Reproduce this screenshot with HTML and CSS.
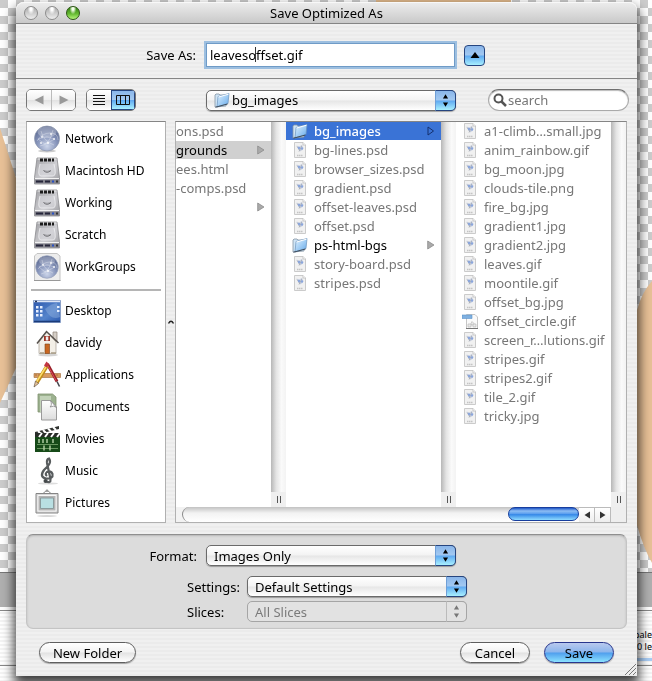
FILE: index.html
```html
<!DOCTYPE html>
<html lang="en">
<head>
<meta charset="utf-8">
<title>Save Optimized As</title>
<link rel="stylesheet" href="styles.css">
</head>
<body>
<svg class="defs" width="0" height="0" aria-hidden="true">
  <defs>
    <radialGradient id="globe" cx=".5" cy=".8" r=".8"><stop offset="0" stop-color="#cdd6ea"/><stop offset=".5" stop-color="#8795bb"/><stop offset="1" stop-color="#56648c"/></radialGradient>
    <linearGradient id="metal" x1="0" y1="0" x2="1" y2="1"><stop offset="0" stop-color="#a2a2a6"/><stop offset=".55" stop-color="#cfcfd3"/><stop offset="1" stop-color="#98989c"/></linearGradient>
    <linearGradient id="fold" x1="0" y1="0" x2="1" y2="1"><stop offset="0" stop-color="#e2f3ff"/><stop offset="1" stop-color="#64a9ea"/></linearGradient>
    <linearGradient id="desk" x1="0" y1="0" x2="1" y2="1"><stop offset="0" stop-color="#2c57ad"/><stop offset=".6" stop-color="#5584cb"/><stop offset="1" stop-color="#2a59ae"/></linearGradient>
    <linearGradient id="page" x1="0" y1="0" x2="0" y2="1"><stop offset="0" stop-color="#fff"/><stop offset="1" stop-color="#dcdcdc"/></linearGradient>
    <symbol id="i-network" viewBox="0 0 28 28">
      <ellipse cx="14" cy="26" rx="9" ry="1.5" fill="#ccc"/>
      <circle cx="14" cy="13.500" r="12.500" fill="url(#globe)" stroke="#8a93ab" stroke-width=".7"/>
      <ellipse cx="14" cy="7" rx="9.500" ry="5.500" fill="#fff" opacity=".28"/>
      <path d="M4 16Q9 8 17 8T25 15M7 21Q17 20 20 5M8 6Q10 16 21 20M14 12L22 14L12 19L5 14Z" fill="none" stroke="#fff" stroke-width=".6" opacity=".5"/>
      <g fill="#fff" opacity=".9"><circle cx="9" cy="12" r=".9"/><circle cx="18" cy="9" r=".9"/><circle cx="15" cy="18" r="1.1"/><circle cx="21" cy="14" r=".9"/><circle cx="8" cy="18" r=".9"/></g>
    </symbol>
    <symbol id="i-disk" viewBox="0 0 28 28">
      <path d="M4 1H24L26.500 20.500V27H1.500V20.500Z" fill="url(#metal)" stroke="#8a8a8e" stroke-width=".8"/>
      <path d="M4.500 2H23.500" stroke="#eee"/>
      <path d="M7 1.500h3v3H7zM11 1.500h3v3h-3zM15 1.500h3v3h-3zM19 1.500h2v3h-2z" fill="#1c1c1c"/>
      <path d="M7 7Q4 19 8 19H20Q24 19 21 7" fill="#d6d6da" fill-opacity=".6" stroke="#f0f0f3" stroke-width=".8"/>
      <path d="M10.500 13.500Q14 17 18 13.500" fill="none" stroke="#69696d"/><path d="M10.500 13.500Q14 15 18 13.500" fill="none" stroke="#8d8d91" stroke-width=".7"/>
      <path d="M2 21.500H26" stroke="#f2f2f2"/><path d="M2 22.500H26V26.500H2Z" fill="#85858e"/><path d="M3 24.500h7M12 24.500h5" stroke="#26263a" stroke-width="2"/><path d="M19 24.500h2" stroke="#2751c4" stroke-width="2"/><path d="M23 24.500h2" stroke="#333" stroke-width="2"/>
    </symbol>
    <symbol id="i-group" viewBox="0 0 28 28">
      <path d="M4 .5H24L27 3V27.500H1.500V3Z" fill="#ededed" stroke="#c4c4c4"/><path d="M1 27.500H27.500" stroke="#999"/>
      <circle cx="14" cy="14" r="11.300" fill="url(#globe)" stroke="#98a2bc" stroke-width=".7"/>
      <ellipse cx="14" cy="8" rx="8" ry="4.500" fill="#fff" opacity=".25"/>
      <path d="M5 16Q10 9 17 9T24 15M8 21Q16 20 19 6M9 7Q10 16 20 20M14 12L22 14L12 19L6 14Z" fill="none" stroke="#fff" stroke-width=".6" opacity=".5"/>
      <g fill="#fff" opacity=".9"><circle cx="10" cy="12" r=".9"/><circle cx="18" cy="10" r=".9"/><circle cx="15" cy="18" r="1.1"/><circle cx="21" cy="14" r=".9"/></g>
    </symbol>
    <symbol id="i-desktop" viewBox="0 0 28 28">
      <path d="M.5 3.500H27.500V25.500H.5Z" fill="url(#desk)" stroke="#8aa0c8"/><path d="M1 4.500H27" stroke="#dfe6f6" stroke-width="1.500"/><path d="M2 4.500h2" stroke="#235" stroke-width="1.500"/>
      <path d="M12 12Q19 6 24 6L27 20Q18 24 12 12" fill="#89abdc" opacity=".5"/>
      <path d="M3 9h2.500v2.500H3zM7 9h2.500v2.500H7zM3 13h2.500v2.500H3zM7 13h2.500v2.500H7zM3 17h2.500v2.500H3zM7 17h2.500v2.500H7zM24 9h2.500v2H24zM24 13h2.500v2H24z" fill="#e8f0ff"/><path d="M1 24.500H27" stroke="#1b3b79" stroke-width="1.500"/>
    </symbol>
    <symbol id="i-home" viewBox="0 0 28 28">
      <ellipse cx="15" cy="26" rx="10" ry="1.500" fill="#d4d4d4"/>
      <path d="M20 3h4v9h-4z" fill="#d5cec6" stroke="#8a8074" stroke-width=".7"/>
      <path d="M6 13L14 3L23 13V24.500H6Z" fill="#f3efe7" stroke="#a39b8f" stroke-width=".7"/>
      <path d="M4 14.500L13.500 2.500L25.500 14" fill="none" stroke="#55504c" stroke-width="1.500"/>
      <path d="M11 7h6v5h-6z" fill="#9c3426"/><path d="M12.800 7.500h2.500v4h-2.500z" fill="#eee"/><path d="M12 15h4.500v9.500H12z" fill="#c96722" stroke="#7e4318" stroke-width=".6"/><path d="M7 24h4M18 24h5" stroke="#a99d86" stroke-width="1.500"/>
    </symbol>
    <symbol id="i-apps" viewBox="0 0 28 28">
      <path d="M1 12.500H27.500V16.500H1Z" fill="#d79a60" stroke="#a06a38" stroke-width=".6"/><path d="M3 13v2M6 13v2M9 13v2M21 13v2M24 13v2" stroke="#8e5826" stroke-width=".6"/>
      <path d="M14.500 3L24 20.500" stroke="#99202a" stroke-width="3"/><path d="M14 3L23 19.500" stroke="#e0505a" stroke-width="1"/><path d="M24 20.500L26.500 25.500" stroke="#42434b" stroke-width="1.500"/>
      <path d="M14 5L4 21.500" stroke="#c18d1c" stroke-width="3.500"/><path d="M13.500 5L3.500 21" stroke="#ffdf6c" stroke-width="1.500"/><path d="M2.500 20L1 26L5.500 22.500Z" fill="#e8c49b" stroke="#534333" stroke-width=".6"/><path d="M13.500 .5L16 3L13.500 6.500L11 4.500Z" fill="#c23642"/>
    </symbol>
    <symbol id="i-docs" viewBox="0 0 28 28">
      <path d="M5 1H19.500L23 4V19H5Z" fill="#9cb18f" stroke="#80936f" stroke-width=".8"/><path d="M7 3H18V19H7Z" fill="#c2d2b8"/>
      <path d="M8.500 7.500H17.500L23.500 14V27H8.500Z" fill="url(#page)" stroke="#9a9a9a"/><path d="M17.500 7.500Q19.500 12 17 14Q21 12 23.500 14.500Z" fill="#fff" stroke="#888" stroke-width=".8"/>
    </symbol>
    <symbol id="i-movies" viewBox="0 0 28 28">
      <path d="M2 7L26 1V4L2 10Z" fill="#303330"/><path d="M5 6l3 3M10 5l3 3M15 3.500l3 3M20 2l3 3" stroke="#fff" stroke-width="2"/>
      <path d="M2 8H27V27H2Z" fill="#164a18"/><path d="M2 8H27V12H2Z" fill="#292c29"/><path d="M6 12l3-4M12 12l3-4M18 12l3-4M24 12l3-4" stroke="#fff" stroke-width="2"/>
      <path d="M4 19.500h21M4 23.500h21" stroke="#7eaa72" stroke-width=".8"/><path d="M6 14v4M10 14v4M14 14v4M20 14v4M11 20.500v5M17 20.500v5" stroke="#b7d2a9" stroke-width="1.400"/>
    </symbol>
    <symbol id="i-music" viewBox="0 0 28 28">
      <ellipse cx="15" cy="26.500" rx="10" ry="1" fill="#ddd"/>
      <path d="M12.500 24Q18 27 17.500 22L14 6Q13.500 2 16 1.500Q18.500 5 15 9L11 13Q6 20 13 21.500Q20.500 22 19.500 17Q18 13 14 15Q11.500 17 14 19" fill="none" stroke="#585c5e" stroke-width="2.200"/><circle cx="12.500" cy="24" r="2" fill="#45494b"/>
    </symbol>
    <symbol id="i-pics" viewBox="0 0 28 28">
      <path d="M10 4.500L14 1L18 4.500" fill="none" stroke="#888"/><circle cx="14" cy="1.800" r="1.300" fill="#999"/><ellipse cx="14" cy="27" rx="10" ry=".8" fill="#ccc"/>
      <path d="M3 4.500H25V24H3Z" fill="#d8d8d8" stroke="#858585"/><path d="M5 6.500H23V22H5Z" fill="#b4b4b4" stroke="#f6f6f6"/><path d="M7.500 9H20.500V19.500H7.500Z" fill="#b9dfe2" stroke="#8b9b9d"/>
    </symbol>
    <symbol id="i-folder" viewBox="0 0 16 16">
      <path d="M1 3L2 2H5L6 3H12V14L1 15Z" fill="#cfe4f5" stroke="#8594a3" stroke-width=".8"/>
      <path d="M4 4.500L15 1.500L14 11.500L3 15Z" fill="url(#fold)" stroke="#6c93bd" stroke-width=".7"/><path d="M4.500 5L14.500 2.200" stroke="#fff"/><path d="M1.500 15.200L13.500 12" stroke="#3f4c5a"/>
    </symbol>
    <symbol id="i-file" viewBox="0 0 16 16">
      <path d="M2.500 .5H11L13.500 3V15.500H2.500Z" fill="#f1f1f1" stroke="#cbcbcb"/><path d="M11 .5V3H13.500" fill="#fff" stroke="#b5b5b5" stroke-width=".7"/>
      <path d="M4.500 3.500L7.500 4.500L9.500 3L11.500 5.500L10.500 8L8 9.500L6.500 8Z" fill="#ccd3e2"/><path d="M5 4.500L8 8.500M10 3.500L7 9.500" stroke="#a5a9b3" stroke-width=".8"/><circle cx="7" cy="6" r="1.200" fill="#8aa5dc"/><circle cx="10" cy="6.500" r="1.200" fill="#8aa5dc"/>
      <path d="M5 13.500h6" stroke="#c4c4c4" stroke-width="1.500" stroke-dasharray="1.500 .5"/>
    </symbol>
    <symbol id="i-slice" viewBox="0 0 16 16">
      <path d="M4.500 1.500H13L15.500 4V15.500H4.500Z" fill="#fafafa" stroke="#c6c6c6"/><path d="M4 15.500H16" stroke="#777"/><path d="M0 2H10V5.500H0Z" fill="#7fb0e0" stroke="#5c93cb" stroke-width=".6"/>
      <path d="M6 11h3v3H6zM10 8.500l2 2-2 2-1-2zM11 11h3v3h-3z" fill="#e9e9e9" stroke="#bbb" stroke-width=".7"/>
    </symbol>
    <symbol id="i-updown" viewBox="0 0 20 20"><path d="M10 3.500L12.700 8H7.300ZM10 16.500L12.700 12H7.300Z" fill="currentColor"/></symbol>
    <symbol id="i-right" viewBox="0 0 8 10"><path d="M.7 1L7 5L.7 9Z" fill="#aaa" stroke="#8b8b8b" stroke-width=".8"/></symbol>
    <symbol id="i-right-open" viewBox="0 0 8 10"><path d="M1 1L6.500 5L1 9Z" fill="none" stroke="#14306e"/></symbol>
  </defs>
</svg>

<div class="backdrop" aria-hidden="true">
  <svg class="shape-left" width="24" height="300" viewBox="0 120 24 300"><path d="M0 128L16 178L24 220V345L16 368L0 403Z" fill="#e8c197"/></svg>
  <svg class="shape-right" width="15" height="300" viewBox="637 270 15 300"><path d="M652 281Q642 292 637 310V525Q643 547 652 563Z" fill="#e8c197"/></svg>
  <span class="strip-top"></span>
  <div class="palette"><span>pale</span><span>00 le</span></div>
</div>

<main class="window">
  <header class="titlebar">
    <div class="lights">
      <button class="light" aria-label="Close"></button>
      <button class="light" aria-label="Minimize"></button>
      <button class="light green" aria-label="Zoom"></button>
    </div>
    <h1>Save Optimized As</h1>
  </header>

  <section class="control-row name-row">
    <label class="lead" for="filename">Save As:</label>
    <div class="field">
      <input class="filename" id="filename" type="text" value="leavesoffset.gif">
      <span class="caret"></span>
    </div>
    <button class="aqua collapse" aria-label="Collapse browser"><svg width="10" height="8" viewBox="0 0 10 8"><path d="M5 1L9.500 7H.5Z" fill="#000"/></svg></button>
  </section>

  <section class="control-row tool-row">
    <div class="tools">
      <div class="segments">
        <button aria-label="Back"><svg width="10" height="10" viewBox="0 0 10 10"><path d="M9.500 .5V9.500L.5 5Z" fill="#999"/></svg></button>
        <button aria-label="Forward"><svg width="10" height="10" viewBox="0 0 10 10"><path d="M.5 .5V9.500L9.500 5Z" fill="#999"/></svg></button>
      </div>
      <div class="segments">
        <button aria-label="List view"><svg width="12" height="12" viewBox="0 0 12 12"><path d="M0 1.500H12M0 4.500H12M0 7.500H12M0 10.500H12" stroke="#111"/></svg></button>
        <button class="on" aria-label="Column view"><svg width="14" height="12" viewBox="0 0 14 12"><path d="M.5 1.500H13.500V10.500H.5ZM4.500 1V11M9.500 1V11" fill="none" stroke="#111"/></svg></button>
      </div>
    </div>
    <div class="popup with-icon">
      <svg class="lead-icon" width="16" height="16"><use href="#i-folder"/></svg>
      <select aria-label="Location"><option>bg_images</option></select>
      <svg class="knob"><use href="#i-updown"/></svg>
    </div>
    <div class="search">
      <svg width="14" height="14" viewBox="0 0 14 14"><circle cx="5.500" cy="5.500" r="4" fill="none" stroke="#555" stroke-width="2"/><path d="M8.500 8.500L13 13" stroke="#555" stroke-width="2.500"/></svg>
      <input type="search" aria-label="Search" placeholder="search">
    </div>
  </section>

  <section class="browser">
    <nav class="places">
      <ul>
        <li><svg><use href="#i-network"/></svg>Network</li>
        <li><svg><use href="#i-disk"/></svg>Macintosh HD</li>
        <li><svg><use href="#i-disk"/></svg>Working</li>
        <li><svg><use href="#i-disk"/></svg>Scratch</li>
        <li><svg><use href="#i-group"/></svg>WorkGroups</li>
      </ul>
      <hr>
      <ul>
        <li><svg><use href="#i-desktop"/></svg>Desktop</li>
        <li><svg><use href="#i-home"/></svg>davidy</li>
        <li><svg><use href="#i-apps"/></svg>Applications</li>
        <li><svg><use href="#i-docs"/></svg>Documents</li>
        <li><svg><use href="#i-movies"/></svg>Movies</li>
        <li><svg><use href="#i-music"/></svg>Music</li>
        <li><svg><use href="#i-pics"/></svg>Pictures</li>
      </ul>
    </nav>
    <div class="splitter"><svg width="6" height="4" viewBox="0 0 6 4"><path d="M.5 3.500Q3 -1 5.500 3.500" fill="none" stroke="#222" stroke-width="1.400"/></svg></div>
    <div class="columns">
      <div class="panes">
        <ul class="files first">
          <li>ons.psd</li>
          <li class="trail">grounds<svg class="more"><use href="#i-right"/></svg></li>
          <li>ees.html</li>
          <li>-comps.psd</li>
          <li><svg class="more"><use href="#i-right"/></svg></li>
        </ul>
        <div class="gutter"><span class="grip"></span></div>
        <ul class="files">
          <li class="selected"><svg><use href="#i-folder"/></svg>bg_images<svg class="more"><use href="#i-right-open"/></svg></li>
          <li><svg><use href="#i-file"/></svg>bg-lines.psd</li>
          <li><svg><use href="#i-file"/></svg>browser_sizes.psd</li>
          <li><svg><use href="#i-file"/></svg>gradient.psd</li>
          <li><svg><use href="#i-file"/></svg>offset-leaves.psd</li>
          <li><svg><use href="#i-file"/></svg>offset.psd</li>
          <li class="folder"><svg><use href="#i-folder"/></svg>ps-html-bgs<svg class="more"><use href="#i-right"/></svg></li>
          <li><svg><use href="#i-file"/></svg>story-board.psd</li>
          <li><svg><use href="#i-file"/></svg>stripes.psd</li>
        </ul>
        <div class="gutter"><span class="grip"></span></div>
        <ul class="files">
          <li><svg><use href="#i-file"/></svg>a1-climb…small.jpg</li>
          <li><svg><use href="#i-file"/></svg>anim_rainbow.gif</li>
          <li><svg><use href="#i-file"/></svg>bg_moon.jpg</li>
          <li><svg><use href="#i-file"/></svg>clouds-tile.png</li>
          <li><svg><use href="#i-file"/></svg>fire_bg.jpg</li>
          <li><svg><use href="#i-file"/></svg>gradient1.jpg</li>
          <li><svg><use href="#i-file"/></svg>gradient2.jpg</li>
          <li><svg><use href="#i-file"/></svg>leaves.gif</li>
          <li><svg><use href="#i-file"/></svg>moontile.gif</li>
          <li><svg><use href="#i-file"/></svg>offset_bg.jpg</li>
          <li><svg><use href="#i-slice"/></svg>offset_circle.gif</li>
          <li><svg><use href="#i-file"/></svg>screen_r…lutions.gif</li>
          <li><svg><use href="#i-file"/></svg>stripes.gif</li>
          <li><svg><use href="#i-file"/></svg>stripes2.gif</li>
          <li><svg><use href="#i-file"/></svg>tile_2.gif</li>
          <li><svg><use href="#i-file"/></svg>tricky.jpg</li>
        </ul>
        <div class="gutter"><span class="grip"></span></div>
      </div>
      <div class="hscroll">
        <div class="track"><span class="thumb"></span></div>
        <button aria-label="Scroll left"><svg width="6" height="8" viewBox="0 0 6 8"><path d="M6 .5V7.500L.5 4Z" fill="#333"/></svg></button>
        <button aria-label="Scroll right"><svg width="6" height="8" viewBox="0 0 6 8"><path d="M0 .5V7.500L5.500 4Z" fill="#333"/></svg></button>
        <span class="corner"></span>
      </div>
    </div>
  </section>

  <section class="options">
    <div class="option">
      <label for="format">Format:</label>
      <div class="popup"><select id="format"><option>Images Only</option></select><svg class="knob"><use href="#i-updown"/></svg></div>
    </div>
    <div class="option sub">
      <label for="settings">Settings:</label>
      <div class="popup"><select id="settings"><option>Default Settings</option></select><svg class="knob"><use href="#i-updown"/></svg></div>
      <label for="slices">Slices:</label>
      <div class="popup off"><select id="slices" disabled><option>All Slices</option></select><svg class="knob"><use href="#i-updown"/></svg></div>
    </div>
  </section>

  <footer class="actions">
    <button class="pill wide">New Folder</button>
    <span class="spacer"></span>
    <button class="pill">Cancel</button>
    <button class="pill default">Save</button>
    <svg class="resize" width="12" height="12" viewBox="0 0 12 12"><path d="M1 12L12 1M5 12L12 5M9 12L12 9" stroke="#777"/></svg>
  </footer>
</main>
</body>
</html>
```
FILE: styles.css
```css
* { box-sizing: border-box; }

body {
  margin: 0;
  padding: 2px 15px 5px 16px;
  font: 13px/18px "Noto Sans", "Open Sans", sans-serif;
  color: #000;
}

button, input, select { font: inherit; color: inherit; margin: 0; }
button { padding: 0; display: flex; align-items: center; justify-content: center; }
ul { list-style: none; margin: 0; padding: 0; }
.defs { position: absolute; }

/* document window behind the dialog */
.backdrop {
  position: fixed;
  inset: 0;
  z-index: -1;
  overflow: hidden;
  background: repeating-conic-gradient(#fff 0 25%, #ccc 0 50%) 0 0 / 16px 16px;
}
.shape-left { position: absolute; left: 0; top: 120px; }
.shape-right { position: absolute; right: 0; top: 270px; }
.strip-top { position: absolute; left: 376px; top: 0; width: 135px; height: 3px; background: #deb78a; }
.palette {
  position: absolute;
  left: 0;
  right: 0;
  top: 572px;
  bottom: 0;
  padding-top: 57px;
  font-size: 9px;
  line-height: 12px;
  text-align: right;
  background:
    linear-gradient(#a9cdf5, #a9cdf5) 100% 86px / 15px 3px no-repeat,
    linear-gradient(#777 0 1px, #b0b0b0 1px 35px, #fff 35px 38px, #888 38px 39px, transparent 39px 93px, #888 93px 94px, transparent 94px),
    repeating-linear-gradient(#f4f4f4 0 2px, #fff 2px 4px);
}
.palette span { display: block; }

/* dialog */
.window {
  border-radius: 8px 8px 0 0;
  background: repeating-linear-gradient(#ebebeb 0 2px, #f0f0f0 2px 4px);
  box-shadow: 0 7px 12px 2px rgba(0, 0, 0, .75);
}

.titlebar {
  display: grid;
  align-items: center;
  height: 22px;
  border-bottom: 1px solid #858585;
  border-radius: 8px 8px 0 0;
  background: linear-gradient(#ededed, #c9c9c9);
  box-shadow: inset 0 1px #f8f8f8;
}
.titlebar > * { grid-area: 1 / 1; }
.titlebar h1 { margin: 0; font-size: 13px; font-weight: 400; line-height: 18px; text-align: center; }
.lights { display: flex; gap: 7px; padding-left: 8px; }
.light {
  width: 14px;
  height: 14px;
  border: 1px solid #8c8c8c;
  border-radius: 50%;
  background: radial-gradient(ellipse at 50% 15%, #fff 0 12%, transparent 40%), linear-gradient(#aaa, #eee);
}
.light.green {
  border-color: #2c5414;
  background: radial-gradient(ellipse at 50% 12%, #f4ffe9 0 12%, transparent 40%), linear-gradient(#2f7c12, #63b82f 55%, #b5f57a);
}

.control-row {
  display: grid;
  grid-template-columns: 180px 250px 1fr;
  column-gap: 10px;
  align-items: center;
}
.name-row { padding: 19px 0 11px; border-bottom: 1px solid #858585; column-gap: 9px; }
.name-row .lead { padding-left: 0; }
.tool-row { height: 42px; padding-right: 8px; }
.lead { text-align: right; }
.field { position: relative; margin-left: 1px; }
.filename {
  display: block;
  height: 24px;
  width: 100%;
  padding: 0 3px;
  border: 1px solid #6f9bc7;
  border-radius: 0;
  outline: 2px solid #9dbfe0;
  background: #fff;
}
.caret { position: absolute; left: 49px; top: 4px; width: 1px; height: 15px; background: #333; }

.aqua, .segments .on {
  border: 1px solid #26457f;
  background: linear-gradient(#8ab6ea, #a3c9f1 48%, #5fa9f1 52%, #a8f0ff);
}
.collapse { width: 21px; height: 21px; border-radius: 4px; }

.tools { display: flex; gap: 10px; padding-left: 10px; }
.segments { display: flex; border: 1px solid #777; border-radius: 5px; overflow: hidden; }
.segments button {
  width: 24px;
  height: 20px;
  border: 0;
  background: linear-gradient(#fff, #f1f1f1 48%, #e2e2e2 52%, #fff);
}
.segments button + button { border-left: 1px solid #bbb; }
.segments .on { background: linear-gradient(#8ab6ea, #a3c9f1 48%, #5fa9f1 52%, #a8f0ff); }

.popup { position: relative; }
.popup select {
  display: block;
  width: 100%;
  height: 21px;
  padding: 0 28px 0 7px;
  appearance: none;
  border: 1px solid #6a6a6a;
  border-radius: 5px;
  line-height: 18px;
  background: linear-gradient(#fff, #f3f3f3 48%, #e6e6e6 52%, #fff);
  box-shadow: 0 1px 1px rgba(0, 0, 0, .3);
}
.popup.with-icon select { padding-left: 25px; }
.lead-icon { position: absolute; left: 8px; top: 2px; }
.knob {
  position: absolute;
  right: 0;
  top: 0;
  width: 21px;
  height: 21px;
  border: 1px solid #26457f;
  border-left-color: #6f9fd6;
  border-radius: 0 5px 5px 0;
  background: linear-gradient(#8ab6ea, #a3c9f1 48%, #5fa9f1 52%, #a8f0ff);
  pointer-events: none;
}
.popup.off select { color: #7b7b7b; opacity: 1; border-color: #a5a5a5; background: #e2e2e2; box-shadow: none; }
.popup.off .knob { color: #777; border-color: #a5a5a5; border-left-color: #bbb; background: #e2e2e2; }

.search {
  justify-self: end;
  display: flex;
  align-items: center;
  gap: 1px;
  width: 141px;
  height: 22px;
  padding: 0 6px 0 4px;
  border: 1px solid #aaa;
  border-top-color: #6f6f6f;
  border-radius: 11px;
  background: #fff;
  box-shadow: inset 0 1px 1px #bbb;
}
.search svg { flex: none; }
.search input { flex: 1; min-width: 0; height: 18px; padding: 0; border: 0; background: none; appearance: none; }
.search input::placeholder { color: #777; opacity: 1; }

/* file browser */
.browser {
  display: grid;
  grid-template-columns: 140px 9px 1fr;
  padding: 0 10px;
}
.places { padding: 1px 0 3px; font-size: 12px; border: 1px solid #b0b0b0; border-top: 1px solid #858585; background: #fff; }
.places li { display: flex; align-items: center; gap: 4px; height: 32px; padding-left: 6px; }
.places svg { width: 28px; height: 28px; }
.places hr { margin: 6px 4px 4px; height: 2px; border: 0; background: #b5b5b5; }
.splitter { display: flex; align-items: center; justify-content: center; }
.columns { display: flex; flex-direction: column; min-width: 0; border: 1px solid #b0b0b0; border-top-color: #858585; background: #fff; }
.panes { flex: 1; display: grid; grid-template-columns: 95fr 15px 155fr 15px 155fr 15px; }
.files { min-width: 0; overflow: hidden; color: #777; }
.files li { display: flex; align-items: center; height: 19px; padding: 0 6px; gap: 6px; white-space: nowrap; border-bottom: 1px solid #fff; }
.files svg { flex: none; width: 16px; height: 16px; }
.files .more { width: 8px; height: 10px; margin-left: auto; }
.files.first li { padding-left: 0; }
.files .trail { background: #d0d0d0; color: #000; }
.files .folder { color: #000; }
.files .selected { background: #3a73d6; color: #fff; font-weight: 500; }
.gutter {
  display: flex;
  flex-direction: column;
  justify-content: flex-end;
  background: linear-gradient(90deg, #b7b7b7, #e4e4e4 35%, #fafafa 70%, #f3f3f3);
}
.grip {
  height: 15px;
  background:
    linear-gradient(#555, #555) 6px 4px / 1px 7px no-repeat,
    linear-gradient(#555, #555) 9px 4px / 1px 7px no-repeat,
    #efefef;
}
.hscroll { display: flex; height: 15px; background: #f2f2f2; }
.track {
  flex: 1;
  display: flex;
  justify-content: flex-end;
  margin-left: 6px;
  border-left: 1px solid #888;
  border-radius: 8px 0 0 8px;
  background: linear-gradient(#c2c2c2, #f2f2f2 40%, #fff);
}
.thumb {
  width: 71px;
  height: 14px;
  border: 1px solid #173e9e;
  border-radius: 7px;
  background: linear-gradient(#1f57c9, #8dbdf3 25%, #5b9eee 48%, #3689e8 55%, #8fdcff);
}
.hscroll button { width: 16px; border: 0; border-top: 1px solid #bbb; border-right: 1px solid #bbb; background: linear-gradient(#fff, #eee); }
.corner { width: 15px; background: #eee; }

/* export options */
.options {
  display: grid;
  gap: 10px;
  margin: 11px 10px 0;
  padding: 10px 0 6px;
  border: 1px solid #c4c4c4;
  border-top-color: #8f8f8f;
  border-radius: 7px;
  background: #dcdcdc;
  box-shadow: inset 0 1px 2px #b5b5b5;
}
.option { display: grid; grid-template-columns: 170px 250px; column-gap: 9px; align-items: center; }
.option label { text-align: right; }
.option.sub { grid-template-columns: 60px 220px; column-gap: 0; row-gap: 4px; padding-left: 160px; }
.option.sub label { text-align: left; }

.actions { position: relative; display: flex; align-items: center; gap: 14px; padding: 13px 23px 13px; }
.spacer { flex: 1; }
.pill {
  width: 70px;
  height: 21px;
  border: 1px solid #5f5f5f;
  border-radius: 11px;
  background: linear-gradient(#fff, #f3f3f3 48%, #e2e2e2 52%, #fff);
  box-shadow: 0 1px 1px rgba(0, 0, 0, .3);
}
.pill.wide { width: 97px; }
.actions .spacer + .pill { margin-left: 0; }
.pill.default { border-color: #28368d; background: linear-gradient(#b9c9ee, #8bb5ec 48%, #4f9eed 52%, #8be2ff); }
.resize { position: absolute; right: 1px; bottom: 1px; }
```
